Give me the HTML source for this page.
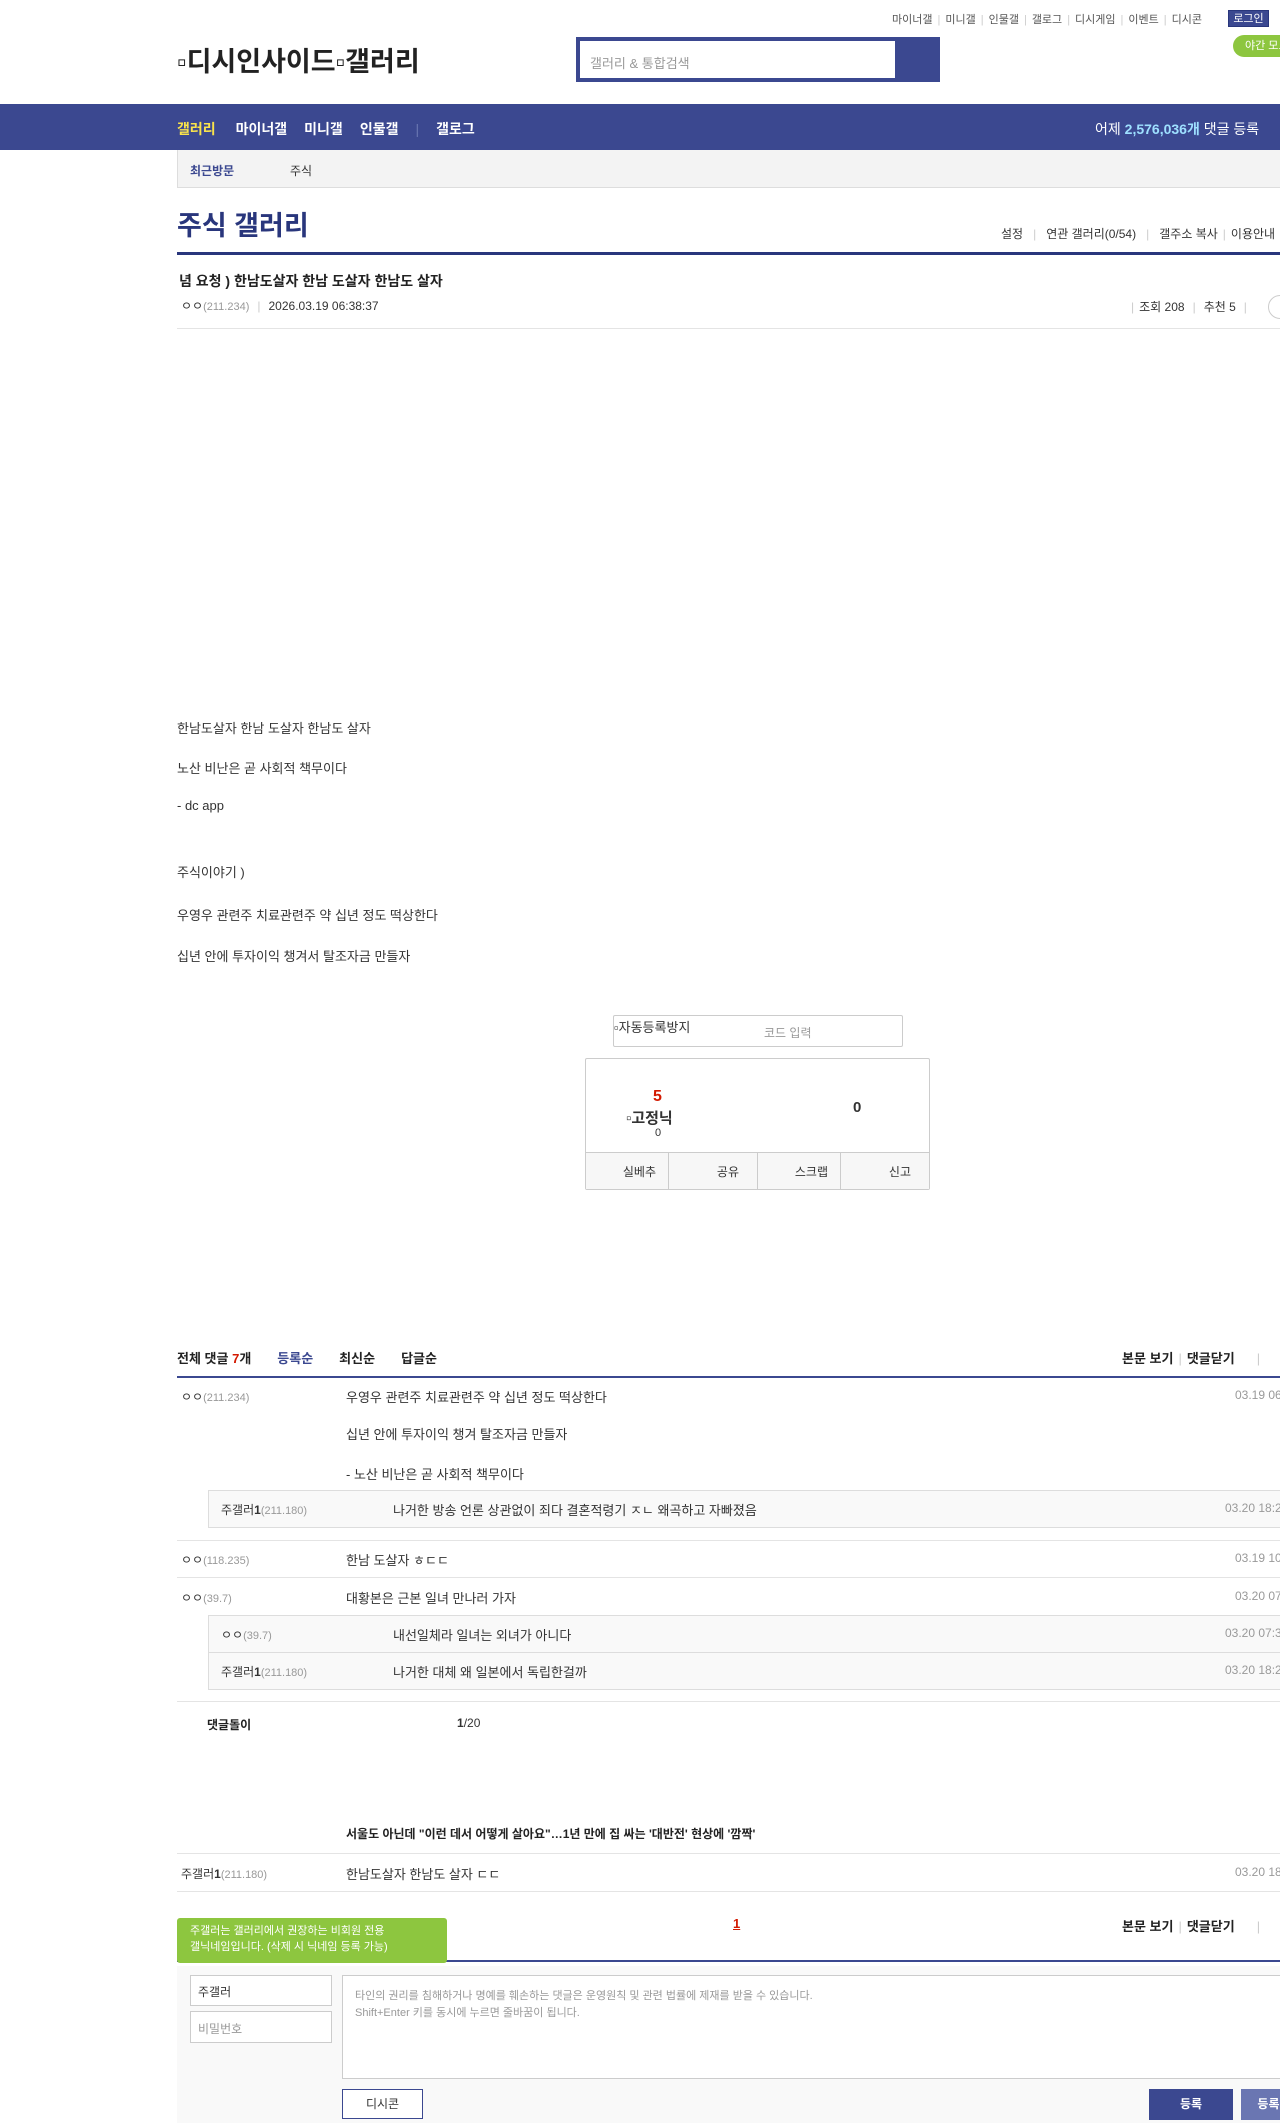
<!DOCTYPE html>
<html><head><meta charset="utf-8">
<style>
*{margin:0;padding:0;box-sizing:border-box}
html,body{width:1280px;height:2123px;overflow:hidden;background:#fff}
body{position:relative;font-family:"Liberation Sans","Noto Sans CJK KR",sans-serif;font-size:13px;color:#333}
.a{position:absolute;white-space:nowrap}
.g{color:#999}
.s{font-size:12px}
.xs{font-size:11px}
.b{font-weight:bold}
.line{position:absolute;left:177px;width:1110px;height:1px;background:#e4e4e4}
.sep{color:#ccc;margin:0 5px}
</style></head><body>
<div class="a xs" style="left:892px;top:11px;color:#555">마이너갤<span class="sep">|</span>미니갤<span class="sep">|</span>인물갤<span class="sep">|</span>갤로그<span class="sep">|</span>디시게임<span class="sep">|</span>이벤트<span class="sep">|</span>디시콘</div>
<div class="a xs" style="left:1228px;top:10px;width:41px;height:17px;background:#3b4890;color:#fff;text-align:center;line-height:17px;border:1px solid #29367c">로그인</div>
<div class="a xs" style="left:1233px;top:35px;width:60px;height:22px;background:#8dc63f;color:#fff;border-radius:11px;line-height:22px;padding-left:12px">야간 모드</div>
<div class="a" style="left:177px;top:40px;font-size:27px;font-weight:bold;color:#222">▫디시인사이드▫갤러리</div>
<div class="a" style="left:576px;top:37px;width:364px;height:45px;background:#3b4890"></div>
<div class="a" style="left:580px;top:41px;width:315px;height:37px;background:#fff;color:#999;padding:12px 10px;font-size:13px">갤러리 &amp; 통합검색</div>
<div class="a" style="left:0;top:104px;width:1280px;height:46px;background:#3b4890"></div>
<div class="a b" style="left:177px;top:119px;font-size:14px;color:#fff"><span style="color:#f9e34b">갤러리</span><span style="margin-left:20px">마이너갤</span><span style="margin-left:17px">미니갤</span><span style="margin-left:17px">인물갤</span><span style="margin-left:17px;color:#6a76b2;font-weight:normal">|</span><span style="margin-left:17px">갤로그</span></div>
<div class="a" style="left:1095px;top:119px;font-size:14px;color:#fff">어제 <b style="color:#9ee0ff">2,576,036개</b> 댓글 등록</div>
<div class="a" style="left:177px;top:150px;width:1110px;height:38px;background:#f3f3f3;border:1px solid #ddd;border-top:none;border-right:none"></div>
<div class="a s b" style="left:190px;top:162px;color:#3b4890">최근방문</div>
<div class="a s" style="left:290px;top:162px;color:#333">주식</div>
<div class="a" style="left:177px;top:204px;font-size:27px;font-weight:bold;color:#29367c">주식 갤러리</div>
<div class="a s" style="left:1001px;top:225px;color:#333">설정<span class="sep" style="margin:0 10px">|</span>연관 갤러리(0/54)<span class="sep" style="margin:0 10px">|</span>갤주소 복사<span class="sep">|</span>이용안내</div>
<div class="a" style="left:177px;top:252px;width:1110px;height:3px;background:#29367c"></div>
<div class="a b" style="left:179px;top:271px;font-size:14px;color:#222">념 요청 ) 한남도살자 한남 도살자 한남도 살자</div>
<div class="a s" style="left:181px;top:297px;color:#333">ㅇㅇ<span class="g xs">(211.234)</span><span class="sep" style="margin:0 8px">|</span>2026.03.19 06:38:37</div>
<div class="a s" style="left:1126px;top:298px;color:#333"><span class="sep">|</span>조회 208<span class="sep" style="margin:0 8px">|</span>추천 5<span class="sep" style="margin:0 8px">|</span></div>
<div class="a" style="left:1268px;top:295px;width:24px;height:24px;border:1px solid #ccc;border-radius:12px"></div>
<div class="line" style="top:328px"></div>
<div class="a" style="left:177px;top:718px">한남도살자 한남 도살자 한남도 살자</div>
<div class="a" style="left:177px;top:758px">노산 비난은 곧 사회적 책무이다</div>
<div class="a" style="left:177px;top:798px">- dc app</div>
<div class="a" style="left:177px;top:862px">주식이야기 )</div>
<div class="a" style="left:177px;top:905px">우영우 관련주 치료관련주 약 십년 정도 떡상한다</div>
<div class="a" style="left:177px;top:946px">십년 안에 투자이익 챙겨서 탈조자금 만들자</div>
<div class="a" style="left:613px;top:1015px;width:290px;height:32px;border:1px solid #ccc;border-radius:2px"></div>
<div class="a" style="left:614px;top:1017px">▫자동등록방지</div>
<div class="a s g" style="left:764px;top:1024px">코드 입력</div>
<div class="a" style="left:585px;top:1058px;width:345px;height:132px;border:1px solid #ccc;border-radius:2px"></div>
<div class="a b" style="left:653px;top:1088px;font-size:16px;color:#d31900">5</div>
<div class="a b" style="left:626px;top:1107px;font-size:15px;color:#333">▫고정닉</div>
<div class="a xs" style="left:655px;top:1127px;color:#333">0</div>
<div class="a b" style="left:853px;top:1099px;font-size:15px;color:#333">0</div>
<div class="a" style="left:586px;top:1152px;width:343px;height:37px;background:#f7f7f7;border-top:1px solid #ccc"></div>
<div class="a s" style="left:586px;top:1163px;width:343px;display:flex;color:#333">
<span style="flex:1;text-align:right;padding-right:12px;border-right:1px solid #ccc;margin-top:-10px;padding-top:10px;height:37px">실베추</span>
<span style="flex:1;text-align:right;padding-right:18px;border-right:1px solid #ccc;margin-top:-10px;padding-top:10px;height:37px">공유</span>
<span style="flex:1;text-align:right;padding-right:12px;border-right:1px solid #ccc;margin-top:-10px;padding-top:10px;height:37px">스크랩</span>
<span style="flex:1;text-align:right;padding-right:18px">신고</span></div>
<div class="a b" style="left:177px;top:1348px;color:#222">전체 댓글 <span style="color:#d31900">7</span>개<span style="margin-left:26px;color:#3b4890">등록순</span><span style="margin-left:26px">최신순</span><span style="margin-left:26px">답글순</span></div>
<div class="a b" style="left:1122px;top:1348px;color:#222">본문 보기<span class="sep" style="font-weight:normal">|</span>댓글닫기<span class="sep" style="margin-left:22px;font-weight:normal">|</span></div>
<div class="a" style="left:177px;top:1376px;width:1110px;height:2px;background:#3b4890"></div>
<div class="a s" style="left:181px;top:1388px">ㅇㅇ<span class="g xs">(211.234)</span></div>
<div class="a" style="left:346px;top:1387px">우영우 관련주 치료관련주 약 십년 정도 떡상한다</div>
<div class="a s g" style="left:1235px;top:1388px">03.19 06:40:11</div>
<div class="a" style="left:346px;top:1424px">십년 안에 투자이익 챙겨 탈조자금 만들자</div>
<div class="a" style="left:346px;top:1464px">- 노산 비난은 곧 사회적 책무이다</div>
<div class="a" style="left:208px;top:1490px;width:1080px;height:38px;background:#f9f9f9;border:1px solid #ddd"></div>
<div class="a s" style="left:221px;top:1501px">주갤러<b>1</b><span class="g xs">(211.180)</span></div>
<div class="a" style="left:393px;top:1500px">나거한 방송 언론 상관없이 죄다 결혼적령기 ㅈㄴ 왜곡하고 자빠졌음</div>
<div class="a s g" style="left:1225px;top:1501px">03.20 18:25:12</div>
<div class="line" style="top:1540px"></div>
<div class="a s" style="left:181px;top:1551px">ㅇㅇ<span class="g xs">(118.235)</span></div>
<div class="a" style="left:346px;top:1550px">한남 도살자 ㅎㄷㄷ</div>
<div class="a s g" style="left:1235px;top:1551px">03.19 10:12:33</div>
<div class="line" style="top:1577px"></div>
<div class="a s" style="left:181px;top:1589px">ㅇㅇ<span class="g xs">(39.7)</span></div>
<div class="a" style="left:346px;top:1588px">대황본은 근본 일녀 만나러 가자</div>
<div class="a s g" style="left:1235px;top:1589px">03.20 07:12:40</div>
<div class="a" style="left:208px;top:1615px;width:1080px;height:75px;background:#f9f9f9;border:1px solid #ddd"></div>
<div class="line" style="left:209px;top:1652px;width:1080px;background:#ddd"></div>
<div class="a s" style="left:221px;top:1626px">ㅇㅇ<span class="g xs">(39.7)</span></div>
<div class="a" style="left:393px;top:1625px">내선일체라 일녀는 외녀가 아니다</div>
<div class="a s g" style="left:1225px;top:1626px">03.20 07:30:11</div>
<div class="a s" style="left:221px;top:1663px">주갤러<b>1</b><span class="g xs">(211.180)</span></div>
<div class="a" style="left:393px;top:1662px">나거한 대체 왜 일본에서 독립한걸까</div>
<div class="a s g" style="left:1225px;top:1663px">03.20 18:26:02</div>
<div class="line" style="top:1701px"></div>
<div class="a s b" style="left:207px;top:1716px;color:#222">댓글돌이</div>
<div class="a s" style="left:457px;top:1716px"><b>1</b>/20</div>
<div class="a s b" style="left:346px;top:1825px;color:#222">서울도 아닌데 "이런 데서 어떻게 살아요"…1년 만에 집 싸는 '대반전' 현상에 '깜짝'</div>
<div class="line" style="top:1853px"></div>
<div class="a s" style="left:181px;top:1865px">주갤러<b>1</b><span class="g xs">(211.180)</span></div>
<div class="a" style="left:346px;top:1864px">한남도살자 한남도 살자 ㄷㄷ</div>
<div class="a s g" style="left:1235px;top:1865px">03.20 18:30:00</div>
<div class="line" style="top:1891px"></div>
<div class="a b" style="left:733px;top:1916px;color:#d31900;text-decoration:underline">1</div>
<div class="a b" style="left:1122px;top:1916px;color:#222">본문 보기<span class="sep" style="font-weight:normal">|</span>댓글닫기<span class="sep" style="margin-left:22px;font-weight:normal">|</span></div>
<div class="a" style="left:177px;top:1960px;width:1110px;height:2px;background:#3b4890"></div>
<div class="a xs" style="left:177px;top:1918px;width:270px;height:45px;background:#8dc63f;color:#fff;padding:5px 13px;line-height:16px;border-radius:3px">주갤러는 갤러리에서 권장하는 비회원 전용<br>갤닉네임입니다. (삭제 시 닉네임 등록 가능)</div>
<div class="a" style="left:177px;top:1966px;width:1110px;height:160px;background:#f9f9f9"></div>
<div class="a s" style="left:190px;top:1975px;width:142px;height:31px;border:1px solid #ccc;background:#fff;padding:7px 7px;color:#333">주갤러</div>
<div class="a s" style="left:190px;top:2011px;width:142px;height:32px;border:1px solid #ccc;background:#fff;padding:8px 7px;color:#999">비밀번호</div>
<div class="a xs" style="left:342px;top:1975px;width:950px;height:104px;border:1px solid #ccc;background:#fff;padding:12px 12px;color:#999;line-height:17px">타인의 권리를 침해하거나 명예를 훼손하는 댓글은 운영원칙 및 관련 법률에 제재를 받을 수 있습니다.<br>Shift+Enter 키를 동시에 누르면 줄바꿈이 됩니다.</div>
<div class="a s" style="left:342px;top:2089px;width:81px;height:30px;border:1px solid #3b4890;background:#fff;text-align:center;line-height:28px;color:#333">디시콘</div>
<div class="a s b" style="left:1149px;top:2089px;width:84px;height:31px;background:#3b4890;color:#fff;text-align:center;line-height:31px">등록</div>
<div class="a s b" style="left:1241px;top:2089px;width:84px;height:31px;background:#6a76b2;color:#fff;text-align:center;line-height:31px">등록+추천</div>
</body></html>
